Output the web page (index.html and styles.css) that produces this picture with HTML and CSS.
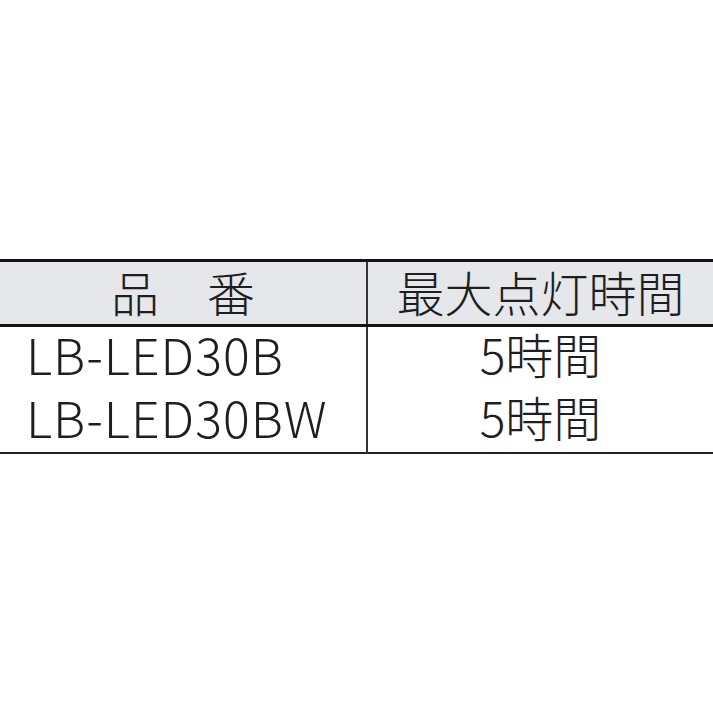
FILE: index.html
```html
<!DOCTYPE html>
<html lang="ja">
<head>
<meta charset="utf-8">
<link rel="stylesheet" href="styles.css">
</head>
<body>
<div class="page">
  <table class="spec">
    <thead>
      <tr>
        <th class="col-name">品　番</th>
        <th class="col-time">最大点灯時間</th>
      </tr>
    </thead>
    <tbody>
      <tr class="first">
        <td class="name">LB-LED30B</td>
        <td class="time">5時間</td>
      </tr>
      <tr class="last">
        <td class="name">LB-LED30BW</td>
        <td class="time">5時間</td>
      </tr>
    </tbody>
  </table>
</div>
</body>
</html>
```
FILE: styles.css
```css
html, body {
  margin: 0;
  padding: 0;
  background: #ffffff;
}

.page {
  width: 713px;
  height: 713px;
  padding-top: 259px;
  box-sizing: border-box;
}

.spec {
  width: 713px;
  border-collapse: collapse;
  table-layout: fixed;
  font-family: "Noto Sans CJK JP", "Noto Sans", sans-serif;
  color: #1e1e1e;
  font-weight: 300;
}

.spec thead tr {
  background: #e5e7eb;
  border-top: 3px solid #141414;
  border-bottom: 3px solid #141414;
}

.spec th {
  height: 58px;
  padding: 0 0 4px 0;
  font-size: 48px;
  font-weight: 300;
  line-height: 58px;
  text-align: center;
}

.col-name {
  width: 366px;
  border-right: 2px solid #333;
}

.spec tbody tr.last {
  border-bottom: 2px solid #222;
}

.spec td {
  padding: 0 0 11px 0;
  font-size: 50px;
  line-height: 50px;
  height: 50px;
}

.spec td.name {
  padding-left: 26px;
  border-right: 2px solid #333;
  letter-spacing: 1px;
}

.spec td.time {
  text-align: center;
  font-size: 48px;
}

.spec tr.first td {
  height: 52px;
  line-height: 52px;
  padding-bottom: 12px;
}
```
